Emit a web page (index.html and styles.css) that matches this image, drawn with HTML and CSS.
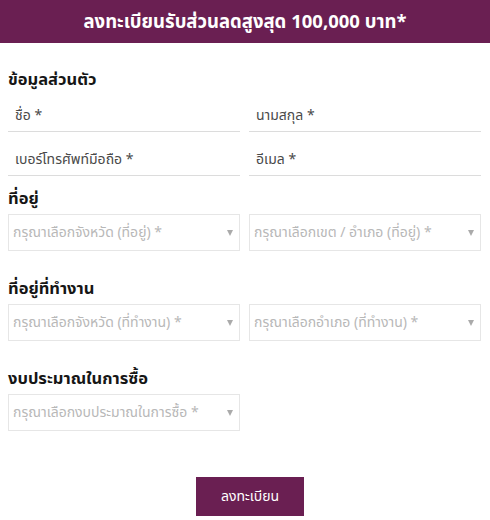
FILE: index.html
```html
<!DOCTYPE html>
<html lang="th">
  <head>
    <meta charset="UTF-8" />
    <meta name="viewport" content="width=device-width, initial-scale=1.0" />
    <title>ลงทะเบียน</title>
    <link rel="stylesheet" href="styles.css">
  </head>
  <body>
    <div class="top-bar">
      <h1>ลงทะเบียนรับส่วนลดสูงสุด 100,000 บาท*</h1>
    </div>

    <form class="reg-form">
      <h2 class="section-title first">ข้อมูลส่วนตัว</h2>
      <div class="two-col">
        <input class="line-input" type="text" placeholder="ชื่อ *" />
        <input class="line-input" type="text" placeholder="นามสกุล *" />
        <input class="line-input" type="tel" placeholder="เบอร์โทรศัพท์มือถือ *" />
        <input class="line-input" type="email" placeholder="อีเมล *" />
      </div>

      <h2 class="section-title after-inputs">ที่อยู่</h2>
      <div class="two-col">
        <div class="select-box">
          <select>
            <option>กรุณาเลือกจังหวัด (ที่อยู่) *</option>
          </select>
        </div>
        <div class="select-box">
          <select>
            <option>กรุณาเลือกเขต / อำเภอ (ที่อยู่) *</option>
          </select>
        </div>
      </div>

      <h2 class="section-title">ที่อยู่ที่ทำงาน</h2>
      <div class="two-col">
        <div class="select-box">
          <select>
            <option>กรุณาเลือกจังหวัด (ที่ทำงาน) *</option>
          </select>
        </div>
        <div class="select-box">
          <select>
            <option>กรุณาเลือกอำเภอ (ที่ทำงาน) *</option>
          </select>
        </div>
      </div>

      <h2 class="section-title">งบประมาณในการซื้อ</h2>
      <div class="two-col">
        <div class="select-box">
          <select>
            <option>กรุณาเลือกงบประมาณในการซื้อ *</option>
          </select>
        </div>
      </div>

      <div class="actions">
        <button type="button" class="btn-submit">ลงทะเบียน</button>
      </div>
    </form>
  </body>
</html>
```

FILE: styles.css
```css
body {
  margin: 0;
  font-family: "Noto Sans Thai", "Noto Sans Thai UI", "Noto Sans", sans-serif;
  color: #222;
  background: #fff;
}
.top-bar {
  background-color: #6a1f52;
  height: 43px;
  display: flex;
  align-items: center;
  justify-content: center;
}
.top-bar h1 {
  margin: 0;
  color: #fff;
  font-size: 18.5px;
  font-weight: bold;
}
.reg-form {
  padding: 0 9px 0 8px;
}
.section-title {
  margin: 26px 0 3px;
  font-size: 16.5px;
  line-height: 24px;
  font-weight: bold;
  color: #161616;
}
.section-title.first {
  margin-top: 25px;
}
.section-title.after-inputs {
  margin-top: 11px;
}
.two-col {
  display: grid;
  grid-template-columns: 1fr 1fr;
  column-gap: 9px;
  row-gap: 7px;
}
.line-input {
  box-sizing: border-box;
  width: 100%;
  height: 37px;
  padding: 10px 7px 6px;
  border: 0;
  border-bottom: 1px solid #dcdcdc;
  font-family: inherit;
  font-size: 14px;
  line-height: 20px;
  color: #333;
  outline: none;
}
.line-input::placeholder {
  color: #4a4a4a;
}
.select-box {
  position: relative;
}
.select-box select {
  box-sizing: border-box;
  width: 100%;
  height: 37px;
  padding: 0 16px 0 4px;
  border: 1px solid #e6e6e6;
  background: #fff;
  font-family: inherit;
  font-size: 14px;
  color: #b8b8b8;
  appearance: none;
  -webkit-appearance: none;
  outline: none;
}
.select-box::after {
  content: "";
  position: absolute;
  right: 7px;
  top: 16px;
  border-left: 3px solid transparent;
  border-right: 3px solid transparent;
  border-top: 6px solid #aaa;
  pointer-events: none;
}
.actions {
  display: flex;
  justify-content: center;
  padding-left: 11px;
  margin-top: 46px;
}
.btn-submit {
  width: 108px;
  height: 39px;
  border: 0;
  background-color: #6a1f52;
  color: #fff;
  font-family: inherit;
  font-size: 14px;
  cursor: pointer;
}
```
